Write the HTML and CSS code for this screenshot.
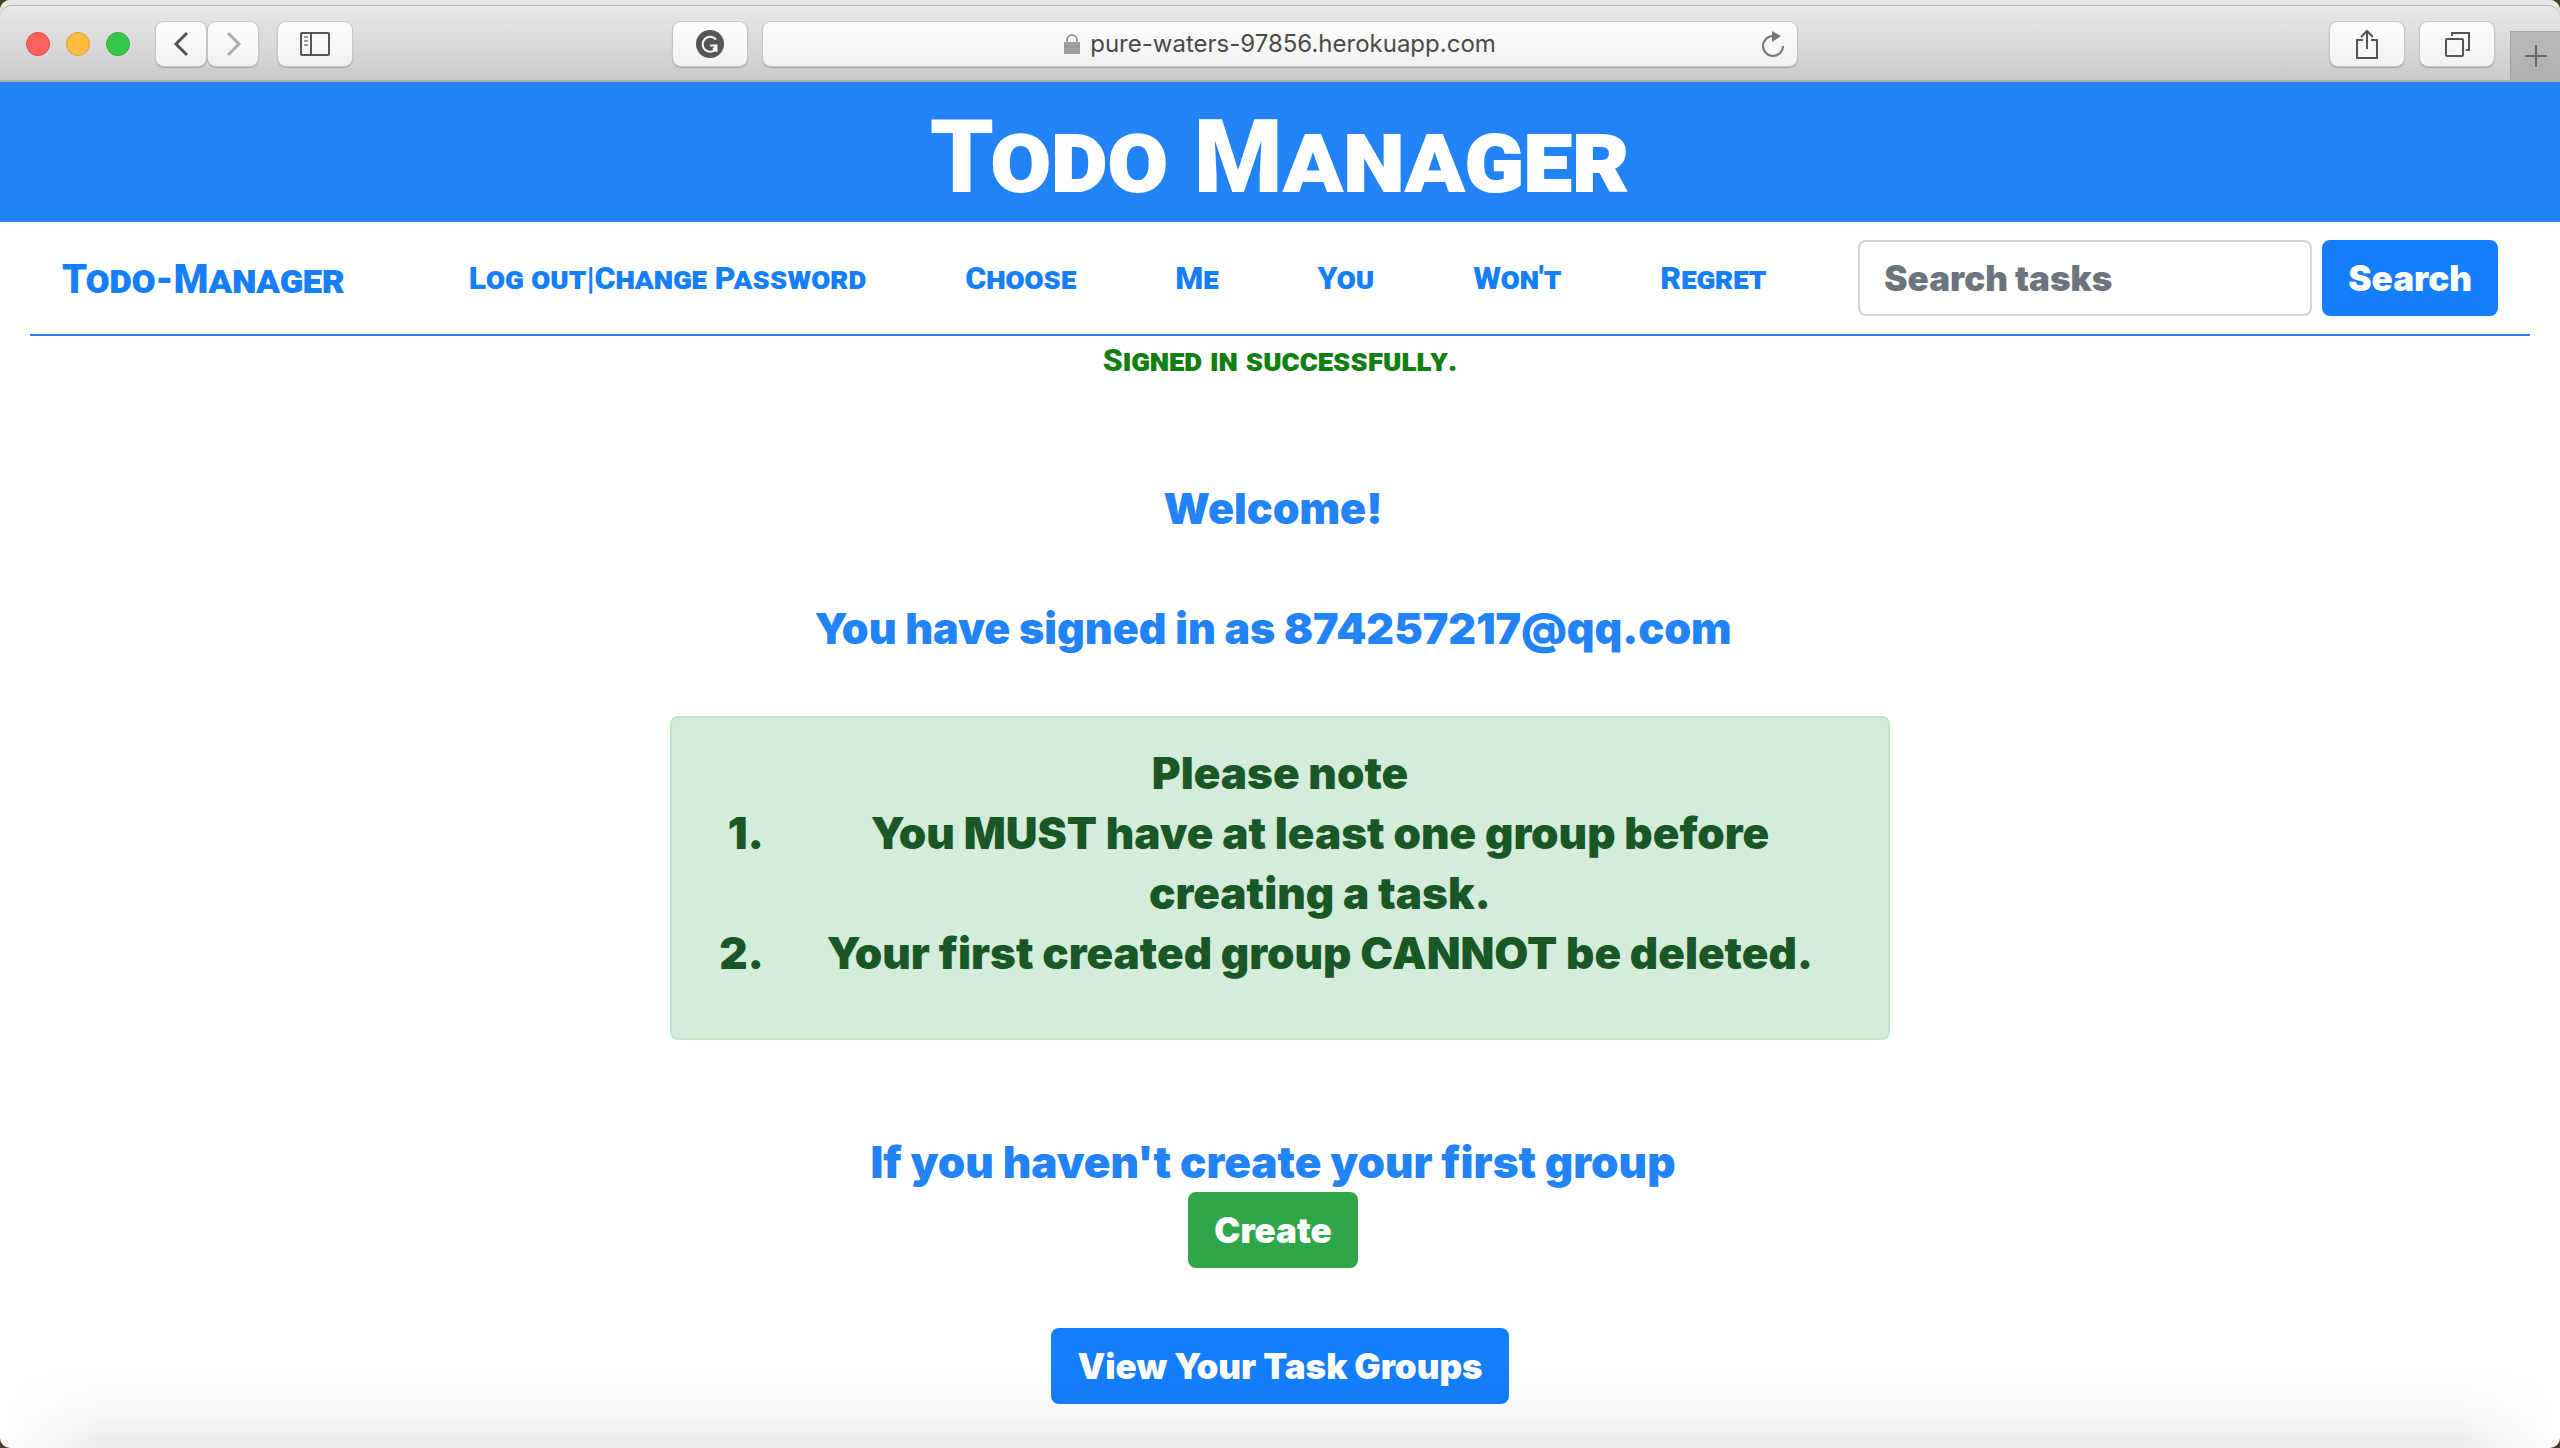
FILE: index.html
```html
<!DOCTYPE html>
<html lang="en">
<head>
<meta charset="utf-8">
<title>Todo Manager</title>
<link rel="stylesheet" href="styles.css">
</head>
<body>
<div class="window">
  <div class="chrome">
    <div class="toolbar">
      <div class="tools tools-left">
        <div class="lights">
          <button class="light close" aria-label="Close"></button>
          <button class="light minimise" aria-label="Minimise"></button>
          <button class="light full" aria-label="Full screen"></button>
        </div>
        <div class="history">
          <button class="tool narrow" aria-label="Back">
            <svg width="20" height="28" viewBox="0 0 20 28" fill="none" stroke="#555" stroke-width="3"><path d="M16 3 5 14l11 11"/></svg>
          </button>
          <button class="tool narrow" aria-label="Forward">
            <svg width="20" height="28" viewBox="0 0 20 28" fill="none" stroke="#adadad" stroke-width="3"><path d="M5 3l11 11L5 25"/></svg>
          </button>
        </div>
        <button class="tool" aria-label="Sidebar">
          <svg width="30" height="24" viewBox="0 0 30 24" fill="none" stroke="#555" stroke-width="2"><rect x="1" y="1" width="28" height="22" rx="1"/><path d="M11 1v22"/><path d="M4 5h4M4 9h4M4 13h4" stroke="#999"/></svg>
        </button>
      </div>
      <div class="address">
        <button class="tool" aria-label="Grammarly">
          <svg width="28" height="28" viewBox="0 0 28 28"><circle cx="14" cy="14" r="14" fill="#555"/><path d="M20 9.500A7.500 7.500 0 1 0 20 19M14 15.500h6.500V22M21 15.500l-4 4" fill="none" stroke="#f8f8f8" stroke-width="2"/></svg>
        </button>
        <div class="url">
          <span class="site">
            <svg width="16" height="20" viewBox="0 0 16 20"><rect y="8" width="16" height="12" rx="1" fill="#9d9d9d"/><path d="M3 9V6a5 5 0 0 1 10 0v3" fill="none" stroke="#9d9d9d" stroke-width="2"/></svg>
            <span>pure-waters-97856.herokuapp.com</span>
          </span>
          <button class="reload" aria-label="Reload">
            <svg width="24" height="28" viewBox="0 0 24 28"><path d="M12 6a10 10 0 1 0 10 10" fill="none" stroke="#777" stroke-width="2"/><path d="M11 1l9 5-9 6z" fill="#777"/></svg>
          </button>
        </div>
      </div>
      <div class="tools tools-right">
        <button class="tool" aria-label="Share">
          <svg width="24" height="32" viewBox="0 0 24 32" fill="none" stroke="#555" stroke-width="2"><path d="M8 12H2v18h20V12h-6M12 21V3M6 9l6-6 6 6"/></svg>
        </button>
        <button class="tool" aria-label="Show tabs">
          <svg width="26" height="26" viewBox="0 0 26 26" fill="none" stroke="#555" stroke-width="2"><rect x="2" y="8" width="17" height="17" rx="1"/><path d="M8 5V2h17v17h-3"/></svg>
        </button>
        <button class="new-tab" aria-label="New tab">
          <svg width="22" height="22" viewBox="0 0 22 22" fill="none" stroke="#666" stroke-width="2"><path d="M11 0v22M0 11h22"/></svg>
        </button>
      </div>
    </div>
  </div>

  <header class="banner"><h1>Todo Manager</h1></header>

  <nav class="navbar">
    <a class="brand" href="#">Todo-Manager</a>
    <div class="links">
      <span><a href="#">Log out</a>|<a href="#">Change Password</a></span>
      <a href="#">Choose</a>
      <a href="#">Me</a>
      <a href="#">You</a>
      <a href="#">Won't</a>
      <a href="#">Regret</a>
    </div>
    <form class="search">
      <input type="search" aria-label="Search tasks" placeholder="Search tasks">
      <button class="btn primary" type="button">Search</button>
    </form>
  </nav>

  <p class="notice">Signed in successfully.</p>

  <main class="content">
    <div class="intro">
      <p>Welcome!</p>
      <p>You have signed in as 874257217@qq.com</p>
    </div>
    <section class="alert">
      <p>Please note</p>
      <ol>
        <li><span>You MUST have at least one group before creating a task.</span></li>
        <li><span>Your first created group CANNOT be deleted.</span></li>
      </ol>
    </section>
    <div class="first-group">
      <p>If you haven't create your first group</p>
      <button class="btn success" type="button">Create</button>
    </div>
    <button class="btn primary" type="button">View Your Task Groups</button>
  </main>
  <div class="shade"></div>
</div>
</body>
</html>
```
FILE: styles.css
```css
* { box-sizing: border-box; }

body {
  margin: 0;
  background: #463f28;
  color: #2282f8;
  font: 900 44px/60px Inter, "Liberation Sans", sans-serif;
}

p, h1, ol { margin: 0; }
a { color: inherit; text-decoration: none; }
button, input { font: inherit; margin: 0; }
button { border: 0; padding: 0; cursor: pointer; }
svg { display: block; }

.window {
  position: relative;
  min-height: 100vh;
  background: #fff;
  border-radius: 10px;
  overflow: hidden;
}

/* Browser chrome */
.chrome { background: #e6e6e6; padding-top: 5px; }

.toolbar {
  display: grid;
  grid-template-columns: auto 321fr 1124fr 533fr auto;
  align-items: start;
  height: 77px;
  padding-top: 16px;
  border-top: 1px solid #b0b0b0;
  border-bottom: 2px solid #b2b2b2;
  border-radius: 12px 12px 0 0;
  background: linear-gradient(#e8e8e8, #cbcbcb);
}

.tools { display: flex; align-items: flex-start; }
.tools-left { padding-left: 26px; gap: 20px; }
.tools-right { grid-column: 5; gap: 16px; }
.lights { display: flex; gap: 16px; padding: 10px 6px 0 0; }
.history { display: flex; gap: 2px; }

.light { width: 24px; height: 24px; border-radius: 50%; border: 1px solid; }
.close { background: #fc605c; border-color: #de4644; }
.minimise { background: #fdbc40; border-color: #de9f34; }
.full { background: #34c84a; border-color: #27a935; }

.tool, .url {
  height: 44px;
  border-radius: 8px;
  background: linear-gradient(#fdfdfd, #f2f2f2);
  box-shadow: 0 0 0 1px #c6c6c6, 0 1px 1px 1px #a6a6a6;
}
.tool {
  display: grid;
  place-items: center;
  flex: none;
  width: 74px;
}
.narrow { width: 50px; }

.address { grid-column: 3; display: flex; gap: 16px; }
.url { flex: 1; display: flex; align-items: center; padding: 0 12px 0 36px; }
.site {
  flex: 1;
  display: flex;
  justify-content: center;
  align-items: center;
  gap: 10px;
  color: #4a4a4a;
  font: 400 24px/32px Inter, sans-serif;
}
.reload { background: none; }

.new-tab {
  display: grid;
  place-items: center;
  width: 50px;
  height: 49px;
  margin-top: 9px;
  background: linear-gradient(#bababa, #b0b0b0);
  border: solid #a5a5a5;
  border-width: 1px 0 0 1px;
}

/* Page header */
.banner {
  height: 140px;
  background: #2282f8;
  color: #fff;
  text-align: center;
}
h1 { font: small-caps 900 102px/150px Roboto, sans-serif; }

.navbar {
  display: flex;
  align-items: center;
  gap: 92px;
  margin: 0 30px;
  padding: 18px 32px;
  border-bottom: 2px solid #2282f8;
  color: #157efb;
  font: small-caps 900 32px/48px Roboto, sans-serif;
}
.brand { margin-right: 32px; padding-top: 4px; font-size: 40px; }
.links { flex: 1; display: flex; justify-content: space-between; }

.search {
  display: flex;
  gap: 10px;
  font: 900 35px/48px Inter, sans-serif;
}
.search input {
  width: 454px;
  height: 76px;
  padding: 0 24px;
  border: 2px solid #ced4da;
  border-radius: 8px;
  background: #fff;
  color: #495057;
}
.search input::placeholder { color: #6c757d; opacity: 1; }

.btn {
  padding: 12px 24px;
  border: 2px solid transparent;
  border-radius: 8px;
  color: #fff;
  font: 900 35px/48px Inter, sans-serif;
}
.primary { background-color: #157efb; border-color: #157efb; }
.success { background-color: #30a64a; border-color: #30a64a; }

.notice {
  color: #118011;
  text-align: center;
  font: small-caps 900 32px/48px Roboto, sans-serif;
}

/* Main column */
.content {
  display: flex;
  flex-direction: column;
  align-items: center;
  padding: 94px 30px 44px;
  text-align: center;
}
.intro, .first-group { padding-right: 14px; }
.intro { display: grid; gap: 60px; font-size: 43px; }
.first-group { margin: 92px 0 60px; }
.first-group .btn { display: block; margin: 0 auto; }

.alert {
  width: 100%;
  max-width: 1220px;
  margin-top: 58px;
  padding: 25px 40px 23px;
  border: 2px solid #c3e6cb;
  border-radius: 8px;
  background: #d4edda;
  color: #1a5727;
}
.alert ol {
  margin-bottom: 32px;
  padding: 0;
  list-style: none;
  counter-reset: note;
}
.alert li {
  display: grid;
  grid-template-columns: 52px 1fr;
  gap: 28px;
  counter-increment: note;
}
.alert li::before { content: counter(note) "."; text-align: right; }

/* Soft shadow along the bottom of the window */
.shade {
  position: absolute;
  inset: auto 0 0;
  height: 84px;
  background: linear-gradient(rgba(0, 0, 0, 0), rgba(0, 0, 0, 0.02) 50%, rgba(0, 0, 0, 0.08));
  -webkit-mask-image: linear-gradient(90deg, transparent, #000 100px, #000 calc(100% - 100px), transparent);
  mask-image: linear-gradient(90deg, transparent, #000 100px, #000 calc(100% - 100px), transparent);
  pointer-events: none;
}
```
